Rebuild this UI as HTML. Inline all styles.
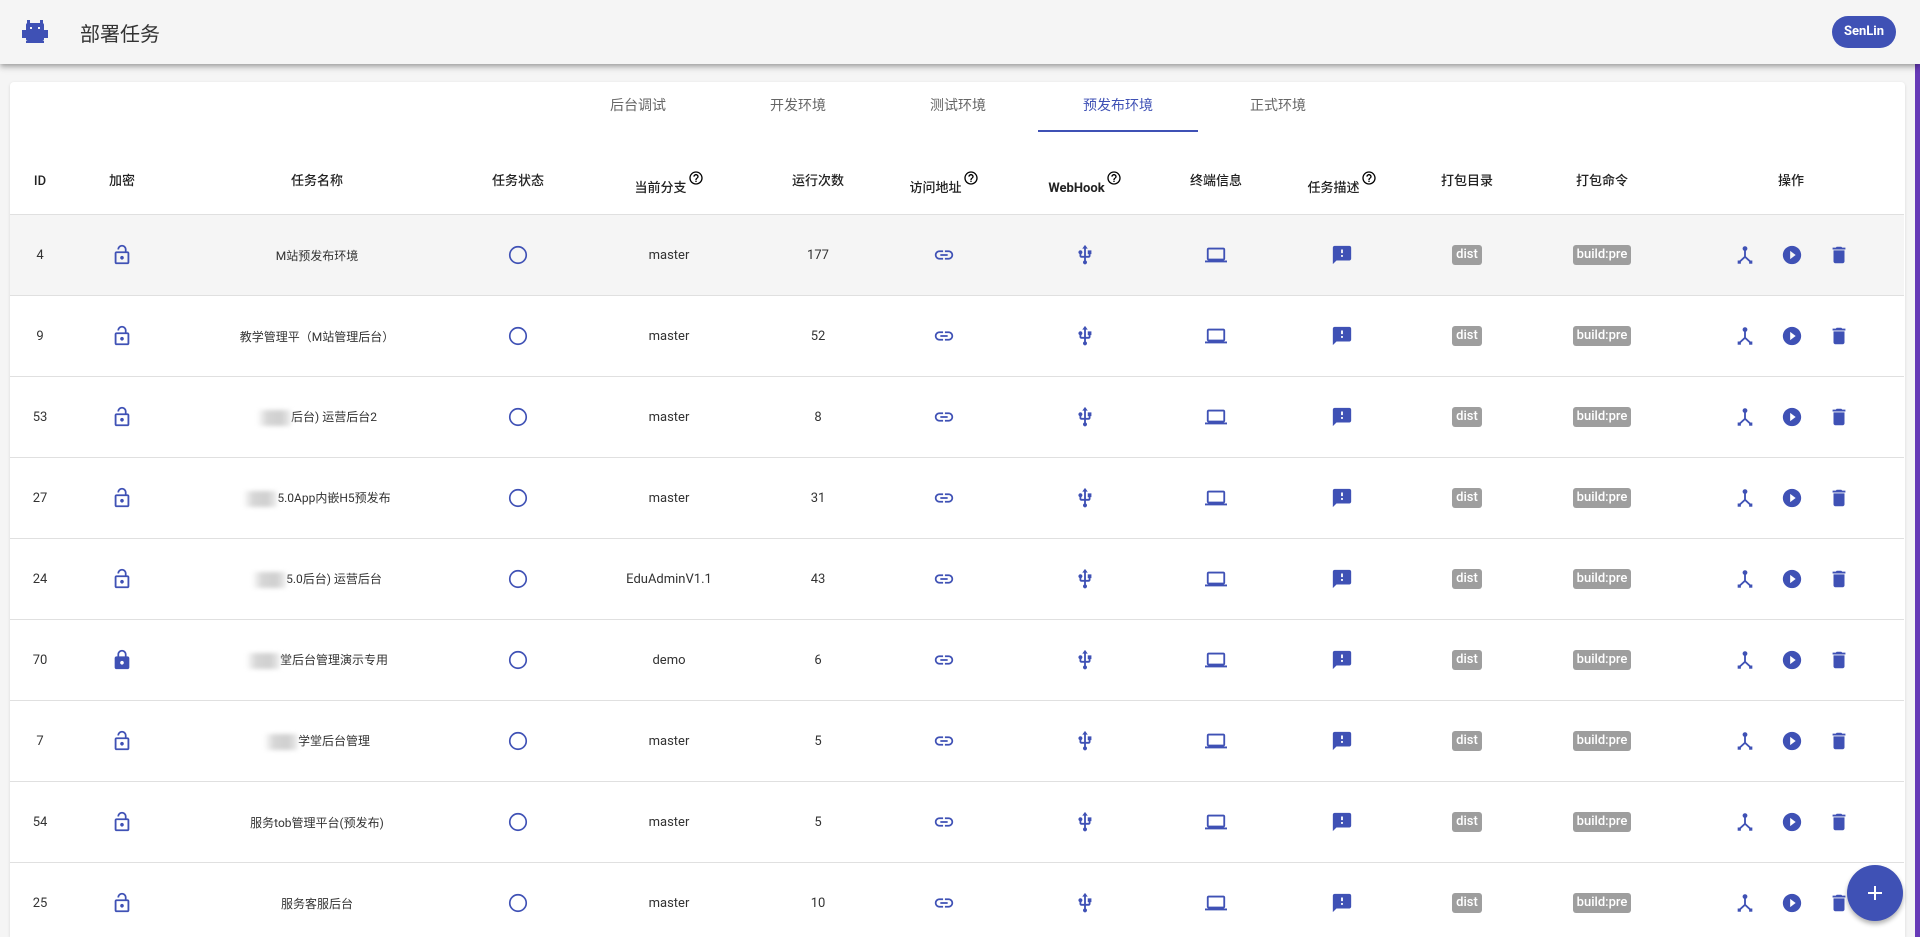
<!DOCTYPE html>
<html><head><meta charset="utf-8"><style>
*{box-sizing:border-box;margin:0;padding:0}
html,body{width:1920px;height:937px;overflow:hidden}
body{background:#f5f5f5;font-family:"Roboto","Liberation Sans","Noto Sans CJK SC",sans-serif;color:rgba(0,0,0,.87);position:relative}
.hdr{position:absolute;left:0;top:0;width:1920px;height:64px;background:#f5f5f5;box-shadow:0 2px 4px -1px rgba(0,0,0,.2),0 4px 5px 0 rgba(0,0,0,.14),0 1px 10px 0 rgba(0,0,0,.12);z-index:2}
.logo{position:absolute;left:22px;top:20px}
.title{position:absolute;left:80px;top:18px;font-size:20px;color:#333}
.user{position:absolute;left:1832px;top:16px;width:64px;height:32px;border-radius:16px;background:#3f51b5;color:#fff;font-size:13px;font-weight:bold;text-align:center;line-height:32px}
.sb{position:absolute;left:1915px;top:64px;width:5px;height:873px;background:#673ab7}
.card{position:absolute;left:10px;top:82px;width:1895px;height:855px;overflow:hidden;background:#fff;border-radius:4px 4px 0 0;box-shadow:0 1px 3px rgba(0,0,0,.12)}
.tabs{position:absolute;left:548px;top:0;height:48px;display:flex}
.tab{width:160px;text-align:center;line-height:48px;font-size:14px;color:#666;position:relative}
.tab.a{color:#3f51b5}
.tab.a:after{content:"";position:absolute;left:0;right:0;bottom:-2px;height:2px;background:#3f51b5}
table{position:absolute;left:0;top:132px;border-collapse:collapse;table-layout:fixed;width:1894px}
td{text-align:center;font-size:13px;height:81px;border-top:1px solid #e0e0e0;color:#333;padding:0}
tbody tr:first-child{background:#f5f5f5}
.hrow{position:absolute;left:0;top:48px;width:1894px;height:84px;display:flex}
.hrow div{text-align:center;font-size:13px;font-weight:500;padding-top:40px;line-height:24px;color:#222;white-space:nowrap}
.q{display:inline-block;width:16px;height:16px;vertical-align:6px;margin-left:1px}
svg.i{width:22px;height:22px;fill:#3f51b5;vertical-align:middle}
.chip{display:inline-block;background:#9e9e9e;color:#fff;font-size:13px;border-radius:3px;padding:0 4px;line-height:20px;font-weight:500}
.blur{display:inline-block;width:34px;height:16px;background:linear-gradient(90deg,#fff,#d6d6d6 30%,#cfcfcf 70%,#eee);filter:blur(2px);vertical-align:middle}
.act{display:flex;justify-content:center;gap:25px;padding-left:2px}
.fab{position:absolute;left:1847px;top:865px;width:56px;height:56px;border-radius:50%;background:#3f51b5;box-shadow:0 3px 5px rgba(0,0,0,.3);z-index:3}
.fab:before,.fab:after{content:"";position:absolute;background:#fff;left:21px;top:27px;width:14px;height:2px}
.fab:after{left:27px;top:21px;width:2px;height:14px}
</style></head><body>
<div class="hdr">
<svg class="logo" width="26" height="24" viewBox="0 0 26 24"><rect x="5" y="0" width="3" height="4" fill="#3f51b5"/><rect x="18" y="0" width="3" height="4" fill="#3f51b5"/><rect x="4" y="3" width="18" height="18" rx="2" fill="#3f51b5"/><rect x="0" y="10" width="26" height="8" fill="#3f51b5"/><rect x="8" y="7" width="2" height="2" fill="#f5f5f5"/><rect x="16" y="7" width="2" height="2" fill="#f5f5f5"/><rect x="4" y="21" width="18" height="2" fill="#3f51b5"/></svg>
<div class="title">部署任务</div>
<div class="user">SenLin</div>
</div>
<div class="sb"></div>
<svg width="0" height="0" style="position:absolute"><defs>
<symbol id="lo" viewBox="0 0 24 24"><path d="M12 17c1.1 0 2-.9 2-2s-.9-2-2-2-2 .9-2 2 .9 2 2 2zm6-9h-1V6c0-2.76-2.24-5-5-5S7 3.24 7 6h1.9c0-1.71 1.39-3.1 3.1-3.1 1.71 0 3.1 1.39 3.1 3.1v2H6c-1.1 0-2 .9-2 2v10c0 1.1.9 2 2 2h12c1.1 0 2-.9 2-2V10c0-1.1-.9-2-2-2zm0 12H6V10h12v10z"/></symbol>
<symbol id="lc" viewBox="0 0 24 24"><path d="M18 8h-1V6c0-2.76-2.24-5-5-5S7 3.24 7 6v2H6c-1.1 0-2 .9-2 2v10c0 1.1.9 2 2 2h12c1.1 0 2-.9 2-2V10c0-1.1-.9-2-2-2zm-6 9c-1.1 0-2-.9-2-2s.9-2 2-2 2 .9 2 2-.9 2-2 2zm3.1-9H8.9V6c0-1.71 1.39-3.1 3.1-3.1 1.71 0 3.1 1.39 3.1 3.1v2z"/></symbol>
<symbol id="ci" viewBox="0 0 24 24"><circle cx="12" cy="12" r="9" fill="none" stroke="#3f51b5" stroke-width="1.8"/></symbol>
<symbol id="ln" viewBox="0 0 24 24"><path d="M3.9 12c0-1.71 1.39-3.1 3.1-3.1h4V7H7c-2.76 0-5 2.24-5 5s2.24 5 5 5h4v-1.9H7c-1.71 0-3.1-1.39-3.1-3.1zM8 13h8v-2H8v2zm9-6h-4v1.9h4c1.71 0 3.1 1.39 3.1 3.1s-1.39 3.1-3.1 3.1h-4V17h4c2.76 0 5-2.24 5-5s-2.24-5-5-5z"/></symbol>
<symbol id="us" viewBox="0 0 24 24"><path d="M15 7v4h1v2h-3V5h2l-3-4-3 4h2v8H8v-2.07c.7-.37 1.2-1.08 1.2-1.93 0-1.21-.99-2.2-2.2-2.2-1.21 0-2.2.99-2.2 2.2 0 .85.5 1.56 1.2 1.93V13c0 1.11.89 2 2 2h3v3.05c-.71.37-1.2 1.1-1.2 1.95 0 1.22.99 2.2 2.2 2.2 1.21 0 2.2-.98 2.2-2.2 0-.85-.49-1.58-1.2-1.95V15h3c1.11 0 2-.89 2-2v-2h1V7h-4z"/></symbol>
<symbol id="lp" viewBox="0 0 24 24"><path d="M20 18c1.1 0 1.99-.9 1.99-2L22 6c0-1.1-.9-2-2-2H4c-1.1 0-2 .9-2 2v10c0 1.1.9 2 2 2H0v2h24v-2h-4zM4 6h16v10H4V6z"/></symbol>
<symbol id="fb" viewBox="0 0 24 24"><path d="M20 2H4c-1.1 0-1.99.9-1.99 2L2 22l4-4h14c1.1 0 2-.9 2-2V4c0-1.1-.9-2-2-2zm-7 12h-2v-2h2v2zm0-4h-2V6h2v4z"/></symbol>
<symbol id="fk" viewBox="0 0 24 24"><circle cx="12" cy="5" r="2.6"/><path d="M11 6h2v7.5l5.5 5-1.4 1.4L12 15.3l-5.1 4.6-1.4-1.4 5.5-5z"/><rect x="4" y="18" width="3.5" height="3.5"/><rect x="16.5" y="18" width="3.5" height="3.5"/></symbol>
<symbol id="pl" viewBox="0 0 24 24"><path d="M12 2C6.48 2 2 6.48 2 12s4.48 10 10 10 10-4.48 10-10S17.52 2 12 2zm-2 14.5v-9l6 4.5-6 4.5z"/></symbol>
<symbol id="dl" viewBox="0 0 24 24"><path d="M6 19c0 1.1.9 2 2 2h8c1.1 0 2-.9 2-2V7H6v12zM19 4h-3.5l-1-1h-5l-1 1H5v2h14V4z"/></symbol>
<symbol id="hp" viewBox="0 0 24 24"><path d="M11 18h2v-2h-2v2zm1-16C6.48 2 2 6.48 2 12s4.48 10 10 10 10-4.48 10-10S17.52 2 12 2zm0 18c-4.41 0-8-3.59-8-8s3.59-8 8-8 8 3.59 8 8-3.59 8-8 8zm0-14c-2.21 0-4 1.79-4 4h2c0-1.1.9-2 2-2s2 .9 2 2c0 2-3 1.75-3 5h2c0-2.25 3-2.5 3-5 0-2.21-1.79-4-4-4z"/></symbol>
</defs></svg>
<div class="card">
<div class="tabs"><div class="tab">后台调试</div><div class="tab">开发环境</div><div class="tab">测试环境</div><div class="tab a">预发布环境</div><div class="tab">正式环境</div></div>
<div class="hrow">
<div style="width:60px">ID</div><div style="width:104px">加密</div><div style="width:286px">任务名称</div><div style="width:116px">任务状态</div><div style="width:186px">当前分支<svg class="q" viewBox="0 0 24 24"><use href="#hp"/></svg></div><div style="width:112px">运行次数</div><div style="width:140px">访问地址<svg class="q" viewBox="0 0 24 24"><use href="#hp"/></svg></div><div style="width:142px;font-weight:bold">WebHook<svg class="q" viewBox="0 0 24 24"><use href="#hp"/></svg></div><div style="width:120px">终端信息</div><div style="width:132px">任务描述<svg class="q" viewBox="0 0 24 24"><use href="#hp"/></svg></div><div style="width:118px">打包目录</div><div style="width:152px">打包命令</div><div style="width:226px">操作</div>
</div>
<table>
<colgroup><col style="width:60px"><col style="width:104px"><col style="width:286px"><col style="width:116px"><col style="width:186px"><col style="width:112px"><col style="width:140px"><col style="width:142px"><col style="width:120px"><col style="width:132px"><col style="width:118px"><col style="width:152px"><col style="width:226px"></colgroup>
<tbody>
<tr><td>4</td><td><svg class="i"><use href="#lo"/></svg></td><td style="font-size:12px">M站预发布环境</td><td><svg class="i"><use href="#ci"/></svg></td><td>master</td><td>177</td><td><svg class="i"><use href="#ln"/></svg></td><td><svg class="i"><use href="#us"/></svg></td><td><svg class="i"><use href="#lp"/></svg></td><td><svg class="i"><use href="#fb"/></svg></td><td><span class="chip">dist</span></td><td><span class="chip">build:pre</span></td><td><div class="act"><svg class="i"><use href="#fk"/></svg><svg class="i"><use href="#pl"/></svg><svg class="i"><use href="#dl"/></svg></div></td></tr>
<tr><td>9</td><td><svg class="i"><use href="#lo"/></svg></td><td style="font-size:12px">教学管理平（M站管理后台）</td><td><svg class="i"><use href="#ci"/></svg></td><td>master</td><td>52</td><td><svg class="i"><use href="#ln"/></svg></td><td><svg class="i"><use href="#us"/></svg></td><td><svg class="i"><use href="#lp"/></svg></td><td><svg class="i"><use href="#fb"/></svg></td><td><span class="chip">dist</span></td><td><span class="chip">build:pre</span></td><td><div class="act"><svg class="i"><use href="#fk"/></svg><svg class="i"><use href="#pl"/></svg><svg class="i"><use href="#dl"/></svg></div></td></tr>
<tr><td>53</td><td><svg class="i"><use href="#lo"/></svg></td><td style="font-size:12px"><span class="blur"></span>后台) 运营后台2</td><td><svg class="i"><use href="#ci"/></svg></td><td>master</td><td>8</td><td><svg class="i"><use href="#ln"/></svg></td><td><svg class="i"><use href="#us"/></svg></td><td><svg class="i"><use href="#lp"/></svg></td><td><svg class="i"><use href="#fb"/></svg></td><td><span class="chip">dist</span></td><td><span class="chip">build:pre</span></td><td><div class="act"><svg class="i"><use href="#fk"/></svg><svg class="i"><use href="#pl"/></svg><svg class="i"><use href="#dl"/></svg></div></td></tr>
<tr><td>27</td><td><svg class="i"><use href="#lo"/></svg></td><td style="font-size:12px"><span class="blur"></span>5.0App内嵌H5预发布</td><td><svg class="i"><use href="#ci"/></svg></td><td>master</td><td>31</td><td><svg class="i"><use href="#ln"/></svg></td><td><svg class="i"><use href="#us"/></svg></td><td><svg class="i"><use href="#lp"/></svg></td><td><svg class="i"><use href="#fb"/></svg></td><td><span class="chip">dist</span></td><td><span class="chip">build:pre</span></td><td><div class="act"><svg class="i"><use href="#fk"/></svg><svg class="i"><use href="#pl"/></svg><svg class="i"><use href="#dl"/></svg></div></td></tr>
<tr><td>24</td><td><svg class="i"><use href="#lo"/></svg></td><td style="font-size:12px"><span class="blur"></span>5.0后台) 运营后台</td><td><svg class="i"><use href="#ci"/></svg></td><td>EduAdminV1.1</td><td>43</td><td><svg class="i"><use href="#ln"/></svg></td><td><svg class="i"><use href="#us"/></svg></td><td><svg class="i"><use href="#lp"/></svg></td><td><svg class="i"><use href="#fb"/></svg></td><td><span class="chip">dist</span></td><td><span class="chip">build:pre</span></td><td><div class="act"><svg class="i"><use href="#fk"/></svg><svg class="i"><use href="#pl"/></svg><svg class="i"><use href="#dl"/></svg></div></td></tr>
<tr><td>70</td><td><svg class="i"><use href="#lc"/></svg></td><td style="font-size:12px"><span class="blur"></span>堂后台管理演示专用</td><td><svg class="i"><use href="#ci"/></svg></td><td>demo</td><td>6</td><td><svg class="i"><use href="#ln"/></svg></td><td><svg class="i"><use href="#us"/></svg></td><td><svg class="i"><use href="#lp"/></svg></td><td><svg class="i"><use href="#fb"/></svg></td><td><span class="chip">dist</span></td><td><span class="chip">build:pre</span></td><td><div class="act"><svg class="i"><use href="#fk"/></svg><svg class="i"><use href="#pl"/></svg><svg class="i"><use href="#dl"/></svg></div></td></tr>
<tr><td>7</td><td><svg class="i"><use href="#lo"/></svg></td><td style="font-size:12px"><span class="blur"></span>学堂后台管理</td><td><svg class="i"><use href="#ci"/></svg></td><td>master</td><td>5</td><td><svg class="i"><use href="#ln"/></svg></td><td><svg class="i"><use href="#us"/></svg></td><td><svg class="i"><use href="#lp"/></svg></td><td><svg class="i"><use href="#fb"/></svg></td><td><span class="chip">dist</span></td><td><span class="chip">build:pre</span></td><td><div class="act"><svg class="i"><use href="#fk"/></svg><svg class="i"><use href="#pl"/></svg><svg class="i"><use href="#dl"/></svg></div></td></tr>
<tr><td>54</td><td><svg class="i"><use href="#lo"/></svg></td><td style="font-size:12px">服务tob管理平台(预发布)</td><td><svg class="i"><use href="#ci"/></svg></td><td>master</td><td>5</td><td><svg class="i"><use href="#ln"/></svg></td><td><svg class="i"><use href="#us"/></svg></td><td><svg class="i"><use href="#lp"/></svg></td><td><svg class="i"><use href="#fb"/></svg></td><td><span class="chip">dist</span></td><td><span class="chip">build:pre</span></td><td><div class="act"><svg class="i"><use href="#fk"/></svg><svg class="i"><use href="#pl"/></svg><svg class="i"><use href="#dl"/></svg></div></td></tr>
<tr><td>25</td><td><svg class="i"><use href="#lo"/></svg></td><td style="font-size:12px">服务客服后台</td><td><svg class="i"><use href="#ci"/></svg></td><td>master</td><td>10</td><td><svg class="i"><use href="#ln"/></svg></td><td><svg class="i"><use href="#us"/></svg></td><td><svg class="i"><use href="#lp"/></svg></td><td><svg class="i"><use href="#fb"/></svg></td><td><span class="chip">dist</span></td><td><span class="chip">build:pre</span></td><td><div class="act"><svg class="i"><use href="#fk"/></svg><svg class="i"><use href="#pl"/></svg><svg class="i"><use href="#dl"/></svg></div></td></tr>
</tbody></table>
</div>
<div class="fab"></div>
</body></html>
